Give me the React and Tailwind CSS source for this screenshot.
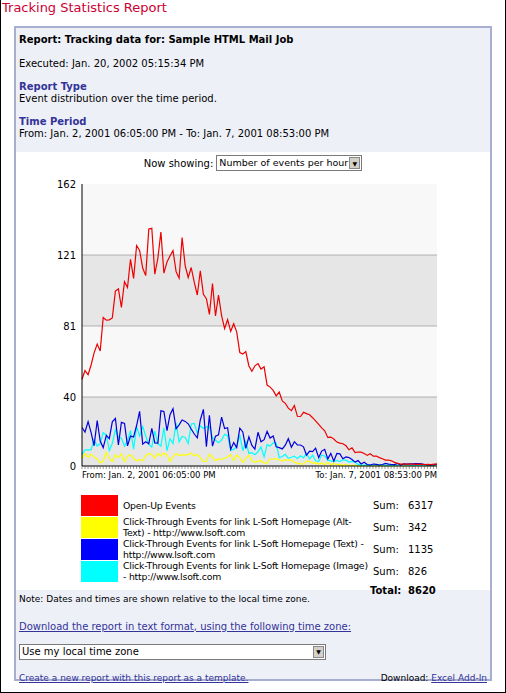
import React from "react";

function rng(seed){let s=seed;return()=>{s=(s*9301+49297)%233280;return s/233280;};}
function series(fn, seed, n=118){const r=rng(seed);const pts=[];for(let i=0;i<n;i++){const x=i*(355/(n-1));pts.push([x,Math.max(0,fn(i/(n-1),r))]);}return pts;}
const H=282;
const toPts=(arr)=>arr.map(([x,v])=>`${(x).toFixed(1)},${(H-v/162*H).toFixed(1)}`).join(" ");
const redF=(t,r)=>{let b;if(t<0.15)b=50+t/0.15*70;else if(t<0.3)b=125-(t-0.15)*60;else if(t<0.55)b=115-(t-0.3)*300;else if(t<0.75)b=40-(t-0.55)*150;else b=Math.max(1,10-(t-0.75)*60);return b+(r()-0.5)*b*0.25;};
const blueF=(t,r)=>{let b=t<0.3?18+t*20:Math.max(1,24-(t-0.3)*45);return b*(0.5+r());};
const cyanF=(t,r)=>{let b=t<0.3?12+t*20:Math.max(0.5,18-(t-0.3)*35);return b*(0.5+r());};
const yelF=(t,r)=>{let b=t<0.4?6:Math.max(0.3,6-(t-0.4)*15);return b*(0.3+r());};
const red=series(redF,7),blue=series(blueF,13),cyan=series(cyanF,21),yel=series(yelF,5);

function Chart(){
  return (
    <svg width="460" height="500" className="block">
      <g transform="translate(81,185)">
        <rect x="0" y="0" width="355" height="71" fill="#f8f8f8"/>
        <rect x="0" y="71" width="355" height="71" fill="#e6e6e6"/>
        <rect x="0" y="142" width="355" height="71" fill="#f8f8f8"/>
        <rect x="0" y="213" width="355" height="69" fill="#e6e6e6"/>
        {[71,142,213].map(y=><line key={y} x1="0" x2="355" y1={y} y2={y} stroke="#888" strokeWidth="0.6"/>)}
        <polyline points={toPts(yel)} fill="none" stroke="#ffff00" strokeWidth="1.2"/>
        <polyline points={toPts(cyan)} fill="none" stroke="#00ffff" strokeWidth="1.2"/>
        <polyline points={toPts(blue)} fill="none" stroke="#0000dd" strokeWidth="1.2"/>
        <polyline points={toPts(red)} fill="none" stroke="#ee0000" strokeWidth="1.2"/>
        <line x1="0" y1="0" x2="0" y2={H} stroke="#000"/>
        <line x1="0" y1={H} x2="355" y2={H} stroke="#000"/>
        {Array.from({length:118}).map((_,i)=><line key={i} x1={i*3.03} x2={i*3.03} y1={H} y2={H+3} stroke="#333" strokeWidth="0.5"/>)}
      </g>
      {[["162",0],["121",71],["81",142],["40",213],["0",282]].map(([t,y])=><text key={t} x="75" y={185+y+4} textAnchor="end" fontSize="10" fontFamily="DejaVu Sans" fill="#000">{t}</text>)}
      <text x="81" y="479" fontSize="8.5" fontFamily="DejaVu Sans">From: Jan. 2, 2001 06:05:00 PM</text>
      <text x="436" y="479" textAnchor="end" fontSize="8.5" fontFamily="DejaVu Sans">To: Jan. 7, 2001 08:53:00 PM</text>
    </svg>
  );
}

const legend=[
  ["#ff0000","Open-Up Events","6317"],
  ["#ffff00","Click-Through Events for link L-Soft Homepage (Alt-Text) - http://www.lsoft.com","342"],
  ["#0000ff","Click-Through Events for link L-Soft Homepage (Text) - http://www.lsoft.com","1135"],
  ["#00ffff","Click-Through Events for link L-Soft Homepage (Image) - http://www.lsoft.com","826"],
];

export default function App(){
  return (
    <div className="w-[506px] h-[693px] bg-white border border-black border-t-0 text-[10px] text-black overflow-hidden relative" style={{fontFamily:'"DejaVu Sans", Verdana, sans-serif'}}>
      <div className="text-[#cc0033] text-[13px] leading-[16px] pl-[1px]" style={{fontFamily:'Tahoma,"DejaVu Sans",sans-serif'}}>Tracking Statistics Report</div>
      <div className="mx-[13px] mt-[10px] border-2 border-[#a8aed0] h-[655px] bg-[#eef0f8]">
        <div className="px-[3px] pt-[5px] h-[124px]">
          <div className="font-bold text-[10px] leading-[14px]">Report: Tracking data for: Sample HTML Mail Job</div>
          <div className="mt-[10px] leading-[14px]">Executed: Jan. 20, 2002 05:15:34 PM</div>
          <div className="mt-[10px] font-bold text-[#333399] leading-[12px]">Report Type</div>
          <div className="leading-[12px]">Event distribution over the time period.</div>
          <div className="mt-[11px] font-bold text-[#333399] leading-[12px]">Time Period</div>
          <div className="leading-[12px]">From: Jan. 2, 2001 06:05:00 PM - To: Jan. 7, 2001 08:53:00 PM</div>
        </div>
        <div className="bg-white h-[438px] relative">
          <div className="absolute left-[-15px] top-[-153px] pointer-events-none"><Chart/></div>
          <div className="relative flex justify-center items-center gap-[3px] pt-[3px]">
            <span>Now showing:</span>
            <div className="w-[146px] h-[16px] border border-[#7a7a7a] bg-white flex items-center justify-between pl-[2px] pr-[1px] whitespace-nowrap">
              <span className="text-[9.5px]">Number of events per hour</span>
              <span className="w-[11px] h-[12px] bg-[#d4d0c8] border border-[#888] text-[6px] flex items-center justify-center">▼</span>
            </div>
          </div>
          <div className="absolute left-[65px] top-[342px] w-[420px]">
            {legend.map(([c,l,s])=>(
              <div key={l} className="flex items-center h-[22px]">
                <div className="w-[37px] h-[21px] shrink-0" style={{background:c}}/>
                <div className="w-[250px] pl-[5px] leading-[11px] text-[9.3px] tracking-[-0.2px]">{l}</div>
                <div className="w-[40px] pl-[5px]">Sum:</div>
                <div>{s}</div>
              </div>
            ))}
            <div className="flex h-[16px] items-center font-bold"><div className="w-[289px]"/><div className="w-[38px]">Total:</div><div>8620</div></div>
          </div>
        </div>
        <div className="px-[3px] pt-[3px]">
          <div className="text-[9px]">Note: Dates and times are shown relative to the local time zone.</div>
          <div className="mt-[12px] text-[#333399] underline">Download the report in text format, using the following time zone:</div>
          <div className="mt-[10px] w-[307px] h-[16px] border border-[#7a7a7a] bg-white flex items-center justify-between pl-[2px] pr-[1px]">
            <span>Use my local time zone</span>
            <span className="w-[11px] h-[12px] bg-[#d4d0c8] border border-[#888] text-[6px] flex items-center justify-center">▼</span>
          </div>
          <div className="mt-[12px] flex justify-between text-[9px]">
            <span className="text-[#333399] underline">Create a new report with this report as a template.</span>
            <span>Download: <span className="text-[#333399] underline">Excel Add-In</span></span>
          </div>
        </div>
      </div>
    </div>
  );
}
